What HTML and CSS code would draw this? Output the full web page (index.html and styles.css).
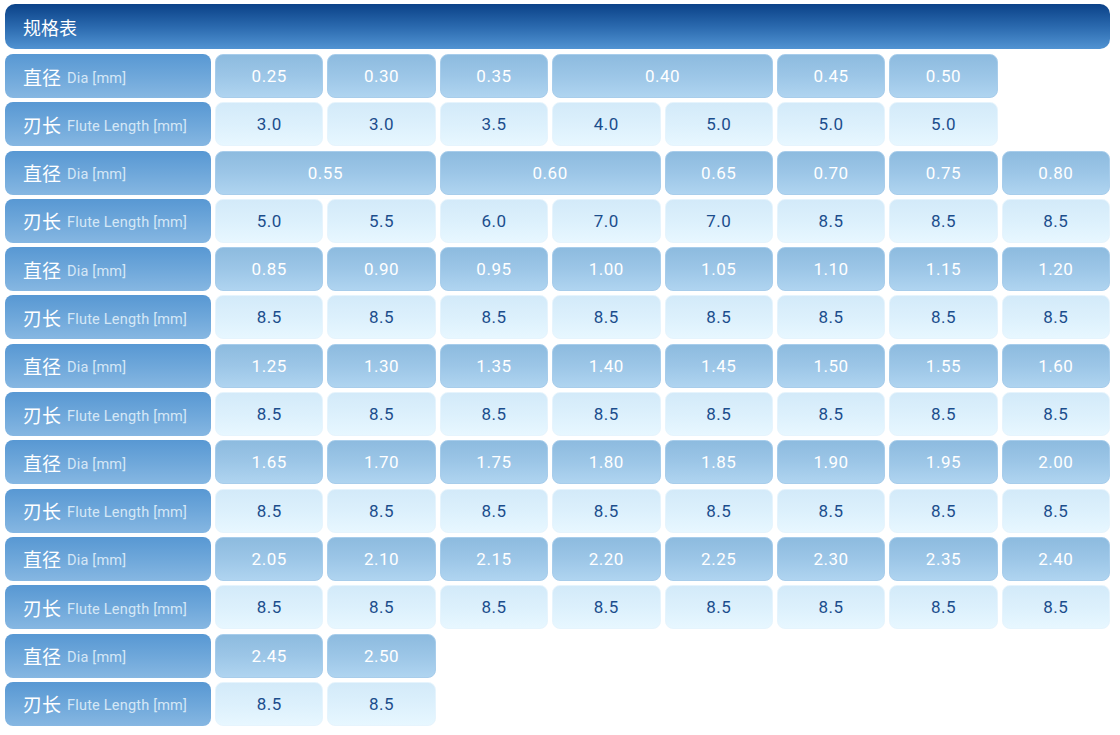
FILE: index.html
```html
<!DOCTYPE html>
<html lang="zh">
<head>
<meta charset="utf-8">
<title>规格表</title>
<link rel="stylesheet" href="styles.css">
</head>
<body>
<div class="page">
  <div class="title">规格表</div>
  <div class="grid">
    <div class="lab"><span class="zh">直径</span><span class="en">Dia [mm]</span></div>
    <div class="d">0.25</div><div class="d">0.30</div><div class="d">0.35</div><div class="d s2">0.40</div><div class="d">0.45</div><div class="d">0.50</div><div class="blank"></div>

    <div class="lab"><span class="zh">刃长</span><span class="en">Flute Length [mm]</span></div>
    <div class="f">3.0</div><div class="f">3.0</div><div class="f">3.5</div><div class="f">4.0</div><div class="f">5.0</div><div class="f">5.0</div><div class="f">5.0</div><div class="blank"></div>

    <div class="lab"><span class="zh">直径</span><span class="en">Dia [mm]</span></div>
    <div class="d s2">0.55</div><div class="d s2">0.60</div><div class="d">0.65</div><div class="d">0.70</div><div class="d">0.75</div><div class="d">0.80</div>

    <div class="lab"><span class="zh">刃长</span><span class="en">Flute Length [mm]</span></div>
    <div class="f">5.0</div><div class="f">5.5</div><div class="f">6.0</div><div class="f">7.0</div><div class="f">7.0</div><div class="f">8.5</div><div class="f">8.5</div><div class="f">8.5</div>

    <div class="lab"><span class="zh">直径</span><span class="en">Dia [mm]</span></div>
    <div class="d">0.85</div><div class="d">0.90</div><div class="d">0.95</div><div class="d">1.00</div><div class="d">1.05</div><div class="d">1.10</div><div class="d">1.15</div><div class="d">1.20</div>

    <div class="lab"><span class="zh">刃长</span><span class="en">Flute Length [mm]</span></div>
    <div class="f">8.5</div><div class="f">8.5</div><div class="f">8.5</div><div class="f">8.5</div><div class="f">8.5</div><div class="f">8.5</div><div class="f">8.5</div><div class="f">8.5</div>

    <div class="lab"><span class="zh">直径</span><span class="en">Dia [mm]</span></div>
    <div class="d">1.25</div><div class="d">1.30</div><div class="d">1.35</div><div class="d">1.40</div><div class="d">1.45</div><div class="d">1.50</div><div class="d">1.55</div><div class="d">1.60</div>

    <div class="lab"><span class="zh">刃长</span><span class="en">Flute Length [mm]</span></div>
    <div class="f">8.5</div><div class="f">8.5</div><div class="f">8.5</div><div class="f">8.5</div><div class="f">8.5</div><div class="f">8.5</div><div class="f">8.5</div><div class="f">8.5</div>

    <div class="lab"><span class="zh">直径</span><span class="en">Dia [mm]</span></div>
    <div class="d">1.65</div><div class="d">1.70</div><div class="d">1.75</div><div class="d">1.80</div><div class="d">1.85</div><div class="d">1.90</div><div class="d">1.95</div><div class="d">2.00</div>

    <div class="lab"><span class="zh">刃长</span><span class="en">Flute Length [mm]</span></div>
    <div class="f">8.5</div><div class="f">8.5</div><div class="f">8.5</div><div class="f">8.5</div><div class="f">8.5</div><div class="f">8.5</div><div class="f">8.5</div><div class="f">8.5</div>

    <div class="lab"><span class="zh">直径</span><span class="en">Dia [mm]</span></div>
    <div class="d">2.05</div><div class="d">2.10</div><div class="d">2.15</div><div class="d">2.20</div><div class="d">2.25</div><div class="d">2.30</div><div class="d">2.35</div><div class="d">2.40</div>

    <div class="lab"><span class="zh">刃长</span><span class="en">Flute Length [mm]</span></div>
    <div class="f">8.5</div><div class="f">8.5</div><div class="f">8.5</div><div class="f">8.5</div><div class="f">8.5</div><div class="f">8.5</div><div class="f">8.5</div><div class="f">8.5</div>

    <div class="lab"><span class="zh">直径</span><span class="en">Dia [mm]</span></div>
    <div class="d">2.45</div><div class="d">2.50</div><div class="blank s6"></div>

    <div class="lab"><span class="zh">刃长</span><span class="en">Flute Length [mm]</span></div>
    <div class="f">8.5</div><div class="f">8.5</div><div class="blank s6"></div>
  </div>
</div>
</body>
</html>
```

FILE: styles.css
```css
html, body {
  margin: 0;
  padding: 0;
  background: #ffffff;
}
body {
  font-family: Roboto, "Noto Sans", "Noto Sans CJK SC", sans-serif;
}
.page {
  padding: 4px 0 0 5px;
  width: 1105px;
}
.title {
  height: 45px;
  box-sizing: border-box;
  border-radius: 10px;
  background: linear-gradient(to bottom, #0b4288 0%, #2a69ae 50%, #5193d2 100%);
  color: #ffffff;
  font-family: "Noto Sans CJK SC", sans-serif;
  font-size: 18px;
  display: flex;
  align-items: center;
  padding-left: 18px;
  margin-bottom: 5px;
}
.grid {
  display: grid;
  grid-template-columns: 206px repeat(8, 1fr);
  grid-auto-rows: 44px;
  column-gap: 4px;
  row-gap: 4.3px;
}
.lab, .d, .f {
  border-radius: 8px;
  display: flex;
  align-items: center;
  box-sizing: border-box;
}
.lab {
  background: linear-gradient(to bottom, #5898d3 0%, #6ea7da 50%, #86b7e2 100%);
  padding-left: 18px;
  color: #ffffff;
}
.zh {
  font-family: "Noto Sans CJK SC", sans-serif;
  font-size: 19px;
  margin-right: 6px;
}
.en {
  font-family: Roboto, "Noto Sans", sans-serif;
  font-size: 14.5px;
  color: #d5e7f6;
  padding-top: 4px;
  letter-spacing: 0.2px;
}
.d, .f {
  justify-content: center;
  font-size: 17px;
  letter-spacing: 0.5px;
}
.d {
  background: linear-gradient(to bottom, #8dbbdf 0%, #9cc6e7 50%, #afd4f0 100%);
  color: #ffffff;
  border: 1px solid #a8cdeb;
}
.f {
  background: linear-gradient(to bottom, #d3eaf9 0%, #dcf0fc 50%, #e7f7ff 100%);
  color: #1b4d8c;
  border: 1px solid #e6f4fd;
}
.s2 { grid-column: span 2; }
.s6 { grid-column: span 6; }
```
